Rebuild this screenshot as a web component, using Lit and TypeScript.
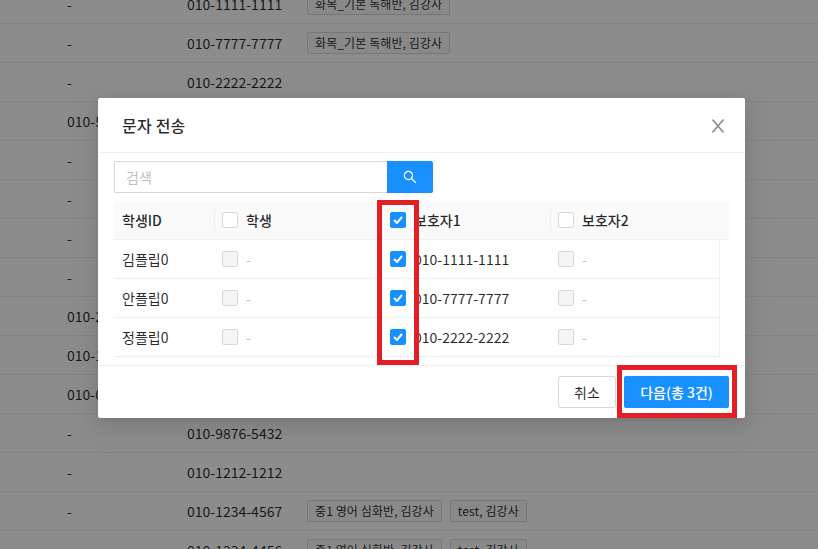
import { LitElement, html, css, svg } from "lit";
import { customElement } from "lit/decorators.js";

const SEARCH = svg`<path d="M909.6 854.5L649.9 594.8C690.2 542.7 712 479 712 412c0-80.2-31.3-155.4-87.9-212.1-56.6-56.7-132-87.9-212.1-87.9s-155.5 31.3-212.1 87.9C143.2 256.5 112 331.8 112 412c0 80.1 31.3 155.5 87.9 212.1C256.5 680.8 331.8 712 412 712c67 0 130.6-21.8 182.7-62l259.7 259.6a8.2 8.2 0 0 0 11.6 0l43.6-43.5a8.2 8.2 0 0 0 0-11.6zM570.4 570.4C528 612.7 471.8 636 412 636s-116-23.3-158.4-65.6C211.3 528 188 471.8 188 412s23.3-116.1 65.6-158.4C296 211.3 352.2 188 412 188s116.1 23.2 158.4 65.6S636 352.2 636 412s-23.3 116.1-65.6 158.4z"/>`;
const CLOSE = svg`<path d="M563.8 512l262.5-312.9c4.4-5.2.7-13.1-6.1-13.1h-79.8c-4.7 0-9.2 2.1-12.3 5.7L511.6 449.8 295.1 191.7c-3-3.6-7.5-5.7-12.3-5.7H203c-6.8 0-10.5 7.9-6.1 13.1L459.4 512 196.9 824.9A7.95 7.95 0 0 0 203 838h79.8c4.7 0 9.2-2.1 12.3-5.7l216.5-258.1 216.5 258.1c3 3.6 7.5 5.7 12.3 5.7h79.8c6.8 0 10.5-7.9 6.1-13.1L563.8 512z"/>`;

const BG_ROWS: [string, string, string[]][] = [
  ["-", "010-1111-1111", ["화목_기본 독해반, 김강사"]],
  ["-", "010-7777-7777", ["화목_기본 독해반, 김강사"]],
  ["-", "010-2222-2222", []],
  ["010-5555-5555", "010-3333-3333", []],
  ["-", "010-4444-4444", []],
  ["-", "010-5555-5555", []],
  ["-", "010-6666-6666", []],
  ["-", "010-8888-8888", []],
  ["010-2222-3333", "010-9999-9999", []],
  ["010-1111-2222", "010-1010-1010", []],
  ["010-0000-0000", "010-2020-2020", []],
  ["-", "010-9876-5432", []],
  ["-", "010-1212-1212", []],
  ["-", "010-1234-4567", ["중1 영어 심화반, 김강사", "test, 김강사"]],
  ["-", "010-1234-4456", ["중1 영어 심화반, 김강사", "test, 김강사"]],
];

const STUDENTS = [
  ["김플립0", "010-1111-1111"],
  ["안플립0", "010-7777-7777"],
  ["정플립0", "010-2222-2222"],
];

@customElement("app-root")
export class AppRoot extends LitElement {
  static styles = css`
    :host {
      display: block;
      position: relative;
      width: 818px;
      height: 549px;
      overflow: hidden;
      background: #fff;
      font-family: "Noto Sans CJK KR", "Noto Sans", sans-serif;
      font-size: 14px;
      color: rgba(0, 0, 0, 0.85);
    }
    .page {
      margin-top: -15px;
    }
    .bg-row {
      display: grid;
      grid-template-columns: 187px 120px 1fr;
      height: 39px;
      box-sizing: border-box;
      border-bottom: 1px solid #f0f0f0;
      align-items: center;
    }
    .bg-first {
      padding-left: 67px;
    }
    .tags {
      display: flex;
      gap: 8px;
    }
    .tag {
      height: 22px;
      box-sizing: border-box;
      padding: 0 7px;
      border: 1px solid #d9d9d9;
      border-radius: 2px;
      background: #fafafa;
      font-size: 12px;
      line-height: 20px;
      letter-spacing: 0.1px;
    }
    .overlay {
      position: absolute;
      inset: 0;
      background: rgba(0, 0, 0, 0.45);
      padding: 98px 0 0 98px;
      box-sizing: border-box;
    }
    .modal {
      width: 647px;
      height: 320px;
      background: #fff;
      border-radius: 2px;
      box-shadow: 0 3px 6px -4px rgba(0, 0, 0, 0.12),
        0 6px 16px 0 rgba(0, 0, 0, 0.08), 0 9px 28px 8px rgba(0, 0, 0, 0.05);
      display: flex;
      flex-direction: column;
    }
    .m-head {
      height: 55px;
      box-sizing: border-box;
      border-bottom: 1px solid #f0f0f0;
      padding: 0 18px 0 24px;
      display: flex;
      align-items: center;
      justify-content: space-between;
    }
    .title {
      font-size: 16px;
      font-weight: 500;
      line-height: 22px;
      letter-spacing: 0.2px;
    }
    .close {
      width: 18px;
      height: 18px;
      margin-top: 1px;
      fill: rgba(0, 0, 0, 0.45);
      display: block;
    }
    .m-body {
      flex: 1;
      padding: 8px 16px;
    }
    .search {
      display: flex;
      width: 319px;
      height: 32px;
      margin-bottom: 8px;
    }
    .search-input {
      flex: 1;
      box-sizing: border-box;
      border: 1px solid #d9d9d9;
      border-right: 0;
      border-radius: 2px 0 0 2px;
      padding: 0 11px;
      line-height: 30px;
      color: #bfbfbf;
    }
    .search-btn {
      width: 46px;
      background: #1890ff;
      border-radius: 0 2px 2px 0;
      display: flex;
      align-items: center;
      justify-content: center;
    }
    .search-btn svg {
      width: 14px;
      height: 14px;
      fill: #fff;
    }
    .t-row {
      display: grid;
      grid-template-columns: 100px 168px 168px 1fr;
      box-sizing: border-box;
      height: 39px;
      border-bottom: 1px solid #f0f0f0;
      align-items: center;
    }
    .t-head {
      background: #fafafa;
      font-weight: 500;
    }
    .t-bodyrow {
      width: 606px;
      border-right: 1px solid #f0f0f0;
    }
    .cell {
      display: flex;
      align-items: center;
      gap: 8px;
      padding-left: 8px;
      height: 100%;
      position: relative;
    }
    .sep::before {
      content: "";
      position: absolute;
      left: 0;
      top: 50%;
      height: 22px;
      margin-top: -11px;
      width: 1px;
      background: #f0f0f0;
    }
    .dash {
      color: rgba(0, 0, 0, 0.25);
    }
    .cb {
      width: 16px;
      height: 16px;
      box-sizing: border-box;
      border: 1px solid #d9d9d9;
      border-radius: 2px;
      background: #fff;
      flex: none;
      display: flex;
      align-items: center;
      justify-content: center;
    }
    .cb.off {
      background: #f5f5f5;
    }
    .cb.on {
      background: #1890ff;
      border-color: #1890ff;
    }
    .cb svg {
      width: 10px;
      height: 8px;
      fill: none;
      stroke: #fff;
      stroke-width: 2;
    }
    .m-foot {
      height: 53px;
      box-sizing: border-box;
      border-top: 1px solid #f0f0f0;
      padding: 10px 16px;
      display: flex;
      justify-content: flex-end;
      gap: 8px;
    }
    .btn {
      height: 32px;
      box-sizing: border-box;
      border-radius: 2px;
      display: flex;
      align-items: center;
      justify-content: center;
    }
    .btn.cancel {
      width: 58px;
      border: 1px solid #d9d9d9;
    }
    .btn.next {
      width: 105px;
      background: #1890ff;
      color: #fff;
      font-weight: 500;
    }
    .mark {
      position: absolute;
      box-sizing: border-box;
      border: 5px solid #e31f26;
    }
    .mark.a {
      left: 377px;
      top: 200px;
      width: 42px;
      height: 165px;
    }
    .mark.b {
      left: 617px;
      top: 365px;
      width: 120px;
      height: 53px;
    }
  `;

  private cb(state: "on" | "blank" | "off") {
    return html`<span class="cb ${state}">
      ${state === "on"
        ? html`<svg viewBox="0 0 10 8"><path d="M1 4l3 3 5-6" /></svg>`
        : ""}
    </span>`;
  }

  render() {
    return html`
      <div class="page">
        ${BG_ROWS.map(
          ([a, b, tags]) => html`<div class="bg-row">
            <div class="bg-first">${a}</div>
            <div>${b}</div>
            <div class="tags">
              ${tags.map((t) => html`<span class="tag">${t}</span>`)}
            </div>
          </div>`
        )}
      </div>
      <div class="overlay">
        <div class="modal">
          <div class="m-head">
            <span class="title">문자 전송</span>
            <svg class="close" viewBox="64 64 896 896">${CLOSE}</svg>
          </div>
          <div class="m-body">
            <div class="search">
              <div class="search-input">검색</div>
              <div class="search-btn">
                <svg viewBox="64 64 896 896">${SEARCH}</svg>
              </div>
            </div>
            <div class="t-row t-head">
              <div class="cell">학생ID</div>
              <div class="cell sep">${this.cb("blank")}학생</div>
              <div class="cell">${this.cb("on")}보호자1</div>
              <div class="cell sep">${this.cb("blank")}보호자2</div>
            </div>
            ${STUDENTS.map(
              ([name, phone]) => html`<div class="t-row t-bodyrow">
                <div class="cell">${name}</div>
                <div class="cell">${this.cb("off")}<span class="dash">-</span></div>
                <div class="cell">${this.cb("on")}${phone}</div>
                <div class="cell">${this.cb("off")}<span class="dash">-</span></div>
              </div>`
            )}
          </div>
          <div class="m-foot">
            <div class="btn cancel">취소</div>
            <div class="btn next">다음(총 3건)</div>
          </div>
        </div>
        <div class="mark a"></div>
        <div class="mark b"></div>
      </div>
    `;
  }
}
